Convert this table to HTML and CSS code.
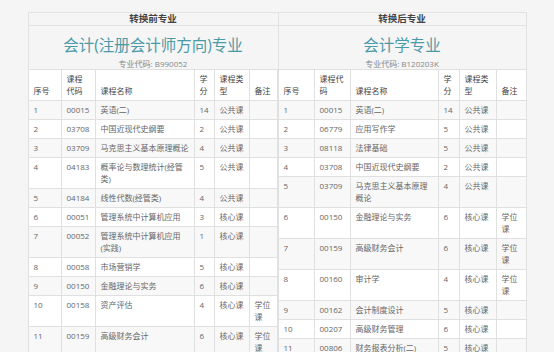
FILE: index.html
```html
<!DOCTYPE html>
<html>
<head>
	<meta charset="utf-8">
	<title>专业转换对照</title>
	<link rel="stylesheet" href="styles.css">
</head>
<body>
<div class="compare">
	<div class="side side-left">
		<h2 class="side-head">转换前专业</h2>
		<div class="major">
			<p class="major-name">会计(注册会计师方向)专业</p>
			<p class="major-code">专业代码: B990052</p>
		</div>
		<table class="course-table">
			<colgroup>
				<col style="width:33px"><col style="width:34px"><col style="width:99px"><col style="width:20px"><col style="width:35px"><col>
			</colgroup>
			<thead>
				<tr><th>序号</th><th>课程代码</th><th>课程名称</th><th>学分</th><th>课程类型</th><th>备注</th></tr>
			</thead>
			<tbody>
				<tr><td>1</td><td>00015</td><td>英语(二)</td><td>14</td><td>公共课</td><td></td></tr>
				<tr><td>2</td><td>03708</td><td>中国近现代史纲要</td><td>2</td><td>公共课</td><td></td></tr>
				<tr><td>3</td><td>03709</td><td>马克思主义基本原理概论</td><td>4</td><td>公共课</td><td></td></tr>
				<tr><td>4</td><td>04183</td><td>概率论与数理统计(经管类)</td><td>5</td><td>公共课</td><td></td></tr>
				<tr><td>5</td><td>04184</td><td>线性代数(经管类)</td><td>4</td><td>公共课</td><td></td></tr>
				<tr><td>6</td><td>00051</td><td>管理系统中计算机应用</td><td>3</td><td>核心课</td><td></td></tr>
				<tr><td>7</td><td>00052</td><td>管理系统中计算机应用(实践)</td><td>1</td><td>核心课</td><td></td></tr>
				<tr><td>8</td><td>00058</td><td>市场营销学</td><td>5</td><td>核心课</td><td></td></tr>
				<tr><td>9</td><td>00150</td><td>金融理论与实务</td><td>6</td><td>核心课</td><td></td></tr>
				<tr><td>10</td><td>00158</td><td>资产评估</td><td>4</td><td>核心课</td><td>学位课</td></tr>
				<tr><td>11</td><td>00159</td><td>高级财务会计</td><td>6</td><td>核心课</td><td>学位课</td></tr>
			</tbody>
		</table>
	</div>
	<div class="side side-right">
		<h2 class="side-head">转换后专业</h2>
		<div class="major">
			<p class="major-name">会计学专业</p>
			<p class="major-code">专业代码: B120203K</p>
		</div>
		<table class="course-table">
			<colgroup>
				<col style="width:36px"><col style="width:36px"><col style="width:88px"><col style="width:21px"><col style="width:37px"><col>
			</colgroup>
			<thead>
				<tr><th>序号</th><th>课程代码</th><th>课程名称</th><th>学分</th><th>课程类型</th><th>备注</th></tr>
			</thead>
			<tbody>
				<tr><td>1</td><td>00015</td><td>英语(二)</td><td>14</td><td>公共课</td><td></td></tr>
				<tr><td>2</td><td>06779</td><td>应用写作学</td><td>5</td><td>公共课</td><td></td></tr>
				<tr><td>3</td><td>08118</td><td>法律基础</td><td>5</td><td>公共课</td><td></td></tr>
				<tr><td>4</td><td>03708</td><td>中国近现代史纲要</td><td>2</td><td>公共课</td><td></td></tr>
				<tr><td>5</td><td>03709</td><td>马克思主义基本原理概论</td><td>4</td><td>公共课</td><td></td></tr>
				<tr><td>6</td><td>00150</td><td>金融理论与实务</td><td>6</td><td>核心课</td><td>学位课</td></tr>
				<tr><td>7</td><td>00159</td><td>高级财务会计</td><td>6</td><td>核心课</td><td>学位课</td></tr>
				<tr><td>8</td><td>00160</td><td>审计学</td><td>4</td><td>核心课</td><td>学位课</td></tr>
				<tr><td>9</td><td>00162</td><td>会计制度设计</td><td>5</td><td>核心课</td><td></td></tr>
				<tr><td>10</td><td>00207</td><td>高级财务管理</td><td>6</td><td>核心课</td><td></td></tr>
				<tr><td>11</td><td>00806</td><td>财务报表分析(二)</td><td>5</td><td>核心课</td><td></td></tr>
			</tbody>
		</table>
	</div>
</div>
</body>
</html>
```

FILE: styles.css
```css
*{
	margin: 0;
	padding: 0;
	box-sizing: border-box;
}
body{
	background: #f5f5f5;
	font-family: "Open Sans", "Noto Sans CJK SC", sans-serif;
	font-size: 8px;
	color: #666;
}
.compare{
	width: 499px;
	margin: 12px auto 0;
	display: flex;
}
.side-left{
	width: 250px;
}
.side-right{
	width: 249px;
}
.side-head{
	height: 14px;
	line-height: 12px;
	font-size: 9.5px;
	font-weight: bold;
	color: #444;
	text-align: center;
	border: 1px solid #e2e2e2;
	background: #f5f5f5;
}
.side-left .side-head{
	border-right: none;
}
.major{
	height: 43px;
	padding-top: 8px;
	text-align: center;
	border-left: 1px solid #e2e2e2;
	border-right: 1px solid #e2e2e2;
}
.side-left .major{
	border-right: none;
}
.major-name{
	font-size: 15.5px;
	line-height: 22px;
	color: #4a9aa8;
}
.major-code{
	margin-top: 2px;
	line-height: 11px;
	color: #888;
}
.course-table{
	width: 100%;
	table-layout: fixed;
	border-collapse: collapse;
	background: #fff;
	border: 1px solid #e0e0e0;
}
.course-table th,
.course-table td{
	border: 1px solid #e0e0e0;
	padding: 3px 5px;
	line-height: 12px;
	text-align: left;
	font-weight: normal;
}
.course-table th{
	vertical-align: bottom;
	color: #444;
}
.course-table td{
	vertical-align: top;
}
.course-table tbody tr:nth-child(odd){
	background: #f8f8f8;
}
```
